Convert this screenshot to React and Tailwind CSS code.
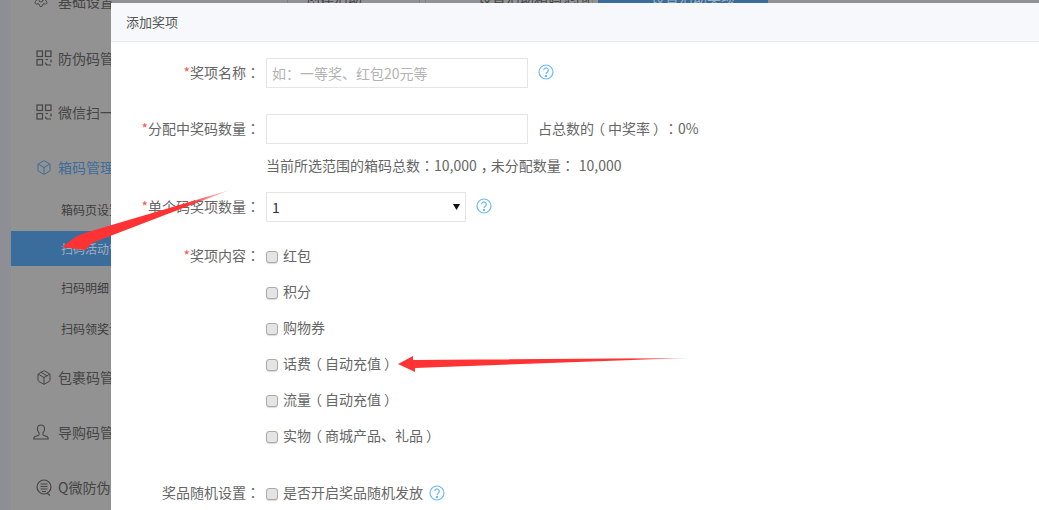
import React from 'react';
import { Settings, Box, Package } from 'lucide-react';

const FONT = '[font-family:"Noto_Sans_CJK_SC","Liberation_Sans",sans-serif]';

// centred fullwidth punctuation, the way the reference font draws it
const Mid = ({ children }) => <span className='[font-family:"Noto_Sans_CJK_TC",sans-serif]'>{children}</span>;
const LP = () => <span className="relative left-[-3px]">（</span>;
const RP = () => <span className="relative left-[3px]">）</span>;

const QrIcon = () => (
  <svg width="16" height="16" viewBox="0 0 16 16" fill="none" stroke="currentColor" strokeWidth="1.2">
    <rect x="1" y="1" width="5.5" height="5.5" />
    <rect x="9.5" y="1" width="5.5" height="5.5" />
    <rect x="1" y="9.5" width="5.5" height="5.5" />
    <path d="M9.5 9.5h2.5M15 9.5v3M9.5 12.5a2.5 2.5 0 0 0 2.5 2.5H15" />
  </svg>
);

const ChatIcon = () => (
  <svg width="16" height="17" viewBox="0 0 16 17" fill="none" stroke="currentColor" strokeWidth="1.2">
    <circle cx="8" cy="8" r="7" />
    <path d="M4.5 5h7M4.5 7.5h7M4.5 10h7M6 12.5h4M11 14l3 2.5" />
  </svg>
);

const UserIcon = () => (
  <svg width="16" height="16" viewBox="0 0 16 16" fill="none" stroke="currentColor" strokeWidth="1.1">
    <path d="M8 1c-2.2 0-3.6 1.7-3.6 4 0 1.7.7 3 1.7 3.9v1.3c0 .6-.4 1-1 1.2L2 12.6c-.7.3-1.2 1-1.2 2.4h14.4c0-1.4-.5-2.1-1.2-2.4l-3.1-1.2c-.6-.2-1-.6-1-1.2V8.900c1-.9 1.700-2.200 1.700-3.900C11.600 2.700 10.200 1 8 1z" />
  </svg>
);

const HelpIcon = () => (
  <svg width="16" height="16" viewBox="0 0 16 16" fill="none" stroke="#6cb8f5" strokeWidth="1.2">
    <circle cx="8" cy="8" r="7" />
    <path d="M5.700 6.200a2.300 2.300 0 1 1 3.500 2c-.8.5-1.200.9-1.200 1.800" />
    <circle cx="8" cy="12" r=".6" fill="#6cb8f5" />
  </svg>
);

const sideItems = [
  { h: 'h-[54px]', icon: <QrIcon />, text: '防伪码管理' },
  { h: 'h-[54px]', icon: <QrIcon />, text: '微信扫一扫' },
  { h: 'h-[42px] mt-[7px]', icon: <Box size={17} strokeWidth={1.500} />, text: '箱码管理', blue: true },
];

const subItems = [
  { h: 'h-[43px]', text: '箱码页设置' },
  { h: 'h-[35px]', text: '扫码活动管理', active: true },
  { h: 'h-[44px]', text: '扫码明细' },
  { h: 'h-[38px]', text: '扫码领奖设置' },
];

const lowerItems = [
  { h: 'h-[58px]', icon: <Package size={17} strokeWidth={1.500} />, text: '包裹码管理' },
  { h: 'h-[52px]', icon: <span className="-translate-x-[3px]"><UserIcon /></span>, text: '导购码管理' },
  { h: 'h-[58px]', icon: <ChatIcon />, text: 'Q微防伪' },
];

const SideRow = ({ item }) => (
  <div className={`${item.h} flex items-center gap-[6px] pl-[25px] whitespace-nowrap ${item.blue ? 'text-[#3f6d99]' : 'text-[#454545]'}`}>
    <span className="flex w-4 shrink-0 justify-center">{item.icon}</span>
    <span>{item.text}</span>
  </div>
);

const Sidebar = () => (
  <div className="ml-[11px] h-full w-[111px] shrink-0 overflow-hidden bg-[#929292] text-sm">
    <div className="flex h-[31px] items-start gap-[6px] pl-[25px] whitespace-nowrap text-[#454545]">
      <span className="-mt-[8px] flex w-4 shrink-0 -translate-x-[3px] justify-center"><Settings size={16} strokeWidth={1.500} /></span>
      <span className="-mt-[9px]">基础设置</span>
    </div>
    {sideItems.map((item) => <SideRow key={item.text} item={item} />)}
    {subItems.map((item) => (
      <div key={item.text} className={`${item.h} flex items-center pl-[50px] text-xs whitespace-nowrap ${item.active ? 'bg-[#3a6d9b] text-[#9fb0c0]' : 'text-[#3d3d3d]'}`}>
        {item.text}
      </div>
    ))}
    {lowerItems.map((item) => <SideRow key={item.text} item={item} />)}
  </div>
);

const Tabs = () => (
  <div className="flex h-[3px] overflow-hidden pl-[165px] text-sm leading-[20px] text-[#454545] whitespace-nowrap">
    <div className="-mt-[13px] h-[20px] w-[133px] border-x border-[#808080] pl-[18px]">创建活动</div>
    <div className="-mt-[13px] ml-[5px] h-[20px] w-[168px] border-x border-[#808080] pl-[52px]">设置活动箱码范围</div>
    <div className="-mt-[13px] ml-[5px] h-[20px] w-[170px] bg-[#3a6d9b] pl-[53px] text-[#9fb0c0]">设置活动奖项</div>
  </div>
);

const Label = ({ required, children }) => (
  <div className="w-[149px] shrink-0 -translate-y-px text-right whitespace-nowrap text-sm text-[#666]">
    {required && <span className="text-[#f55]">*</span>}
    {children}<Mid>：</Mid>
  </div>
);

const Check = ({ children }) => (
  <label className="flex h-[36px] items-center gap-[5px] text-sm text-[#666] whitespace-nowrap">
    <input type="checkbox" className="m-0 h-[12px] w-[12px] translate-y-px appearance-none rounded-[3px] border border-[#aaa] bg-[#e4e4e4] shadow-[0_1px_1px_rgba(0,0,0,0.15)]" />
    <span className="-translate-y-px">{children}</span>
  </label>
);

const ArrowOverlay = () => (
  <svg className="absolute left-0 top-0 pointer-events-none" width="1039" height="510" viewBox="0 0 1039 510">
    <defs>
      <linearGradient id="a1" x1="230" y1="190" x2="62" y2="247" gradientUnits="userSpaceOnUse">
        <stop offset="0" stopColor="#f33" stopOpacity="0.2" />
        <stop offset="0.25" stopColor="#f33" />
      </linearGradient>
      <linearGradient id="a2" x1="688" y1="358" x2="398" y2="364" gradientUnits="userSpaceOnUse">
        <stop offset="0" stopColor="#f33" stopOpacity="0.4" />
        <stop offset="0.2" stopColor="#f33" />
      </linearGradient>
    </defs>
    <path d="M230 190 L88 232 L77 236 L62 247 L85 250 L92 243 Z" fill="url(#a1)" />
    <path d="M688 358 L413 360 L413 356 L398 364 L415 372 L415 368 Z" fill="url(#a2)" />
  </svg>
);

export default function App() {
  return (
    <div className={`relative flex h-[510px] w-[1039px] overflow-hidden bg-[#8e8f94] [text-spacing-trim:space-all] ${FONT}`}>
      <Sidebar />
      <div className="flex-1 bg-[#929292]">
        <Tabs />
      </div>

      {/* dialog */}
      <div className="absolute bottom-0 left-[111px] right-0 top-[3px] bg-white">
        <div className="flex h-[39px] items-center border-b border-[#e8ebf0] bg-[#f6f8fb] pl-[15px] text-[13px] text-[#555]">
          添加奖项
        </div>

        <div className="pt-4">
          <div className="flex h-[30px] items-center gap-[6px]">
            <Label required>奖项名称</Label>
            <input
              className="h-[30px] w-[262px] border border-[#e5e5e5] px-[5px] text-sm placeholder:text-[#b3b3b3]"
              placeholder="如：一等奖、红包20元等"
            />
            <span className="mb-[3px] ml-[4px]"><HelpIcon /></span>
          </div>

          <div className="mt-[26px] flex h-[30px] items-center gap-[6px]">
            <Label required>分配中奖码数量</Label>
            <input className="h-[30px] w-[262px] border border-[#e5e5e5] px-[5px] text-sm" />
            <span className="ml-[4px] -translate-y-px text-sm text-[#666] whitespace-nowrap">占总数的<LP />中奖率<RP /><Mid>：</Mid>0%</span>
          </div>

          <div className="ml-[155px] mt-[10px] h-[22px] text-sm leading-[22px] text-[#666] whitespace-nowrap">
            当前所选范围的箱码总数<Mid>：</Mid>10,000<span className="relative left-[4px]">，</span>未分配数量<Mid>：</Mid><span className="ml-[4px]">10,000</span>
          </div>

          <div className="mt-[16px] flex h-[30px] items-center gap-[6px]">
            <Label required>单个码奖项数量</Label>
            <div className="relative h-[30px] w-[200px]">
              <select className="h-[30px] w-[200px] appearance-none border border-[#e5e5e5] bg-white pl-[5px] text-sm text-[#333]">
                <option>1</option>
              </select>
              <svg className="absolute right-[6px] top-[11px]" width="7" height="7" viewBox="0 0 7 7">
                <path d="M0 1h7L3.500 7z" fill="#111" />
              </svg>
            </div>
            <span className="mb-[3px] ml-[4px]"><HelpIcon /></span>
          </div>

          <div className="mt-[16px] flex gap-[6px]">
            <div className="flex h-[36px] items-center"><Label required>奖项内容</Label></div>
            <div className="flex flex-col">
              <Check>红包</Check>
              <Check>积分</Check>
              <Check>购物券</Check>
              <Check>话费<LP />自动充值<RP /></Check>
              <Check>流量<LP />自动充值<RP /></Check>
              <Check>实物<LP />商城产品、礼品<RP /></Check>
            </div>
          </div>

          <div className="mt-[21px] flex h-[36px] items-center gap-[6px]">
            <Label>奖品随机设置</Label>
            <Check>是否开启奖品随机发放</Check>
            <HelpIcon />
          </div>
        </div>
      </div>

      <ArrowOverlay />
    </div>
  );
}
